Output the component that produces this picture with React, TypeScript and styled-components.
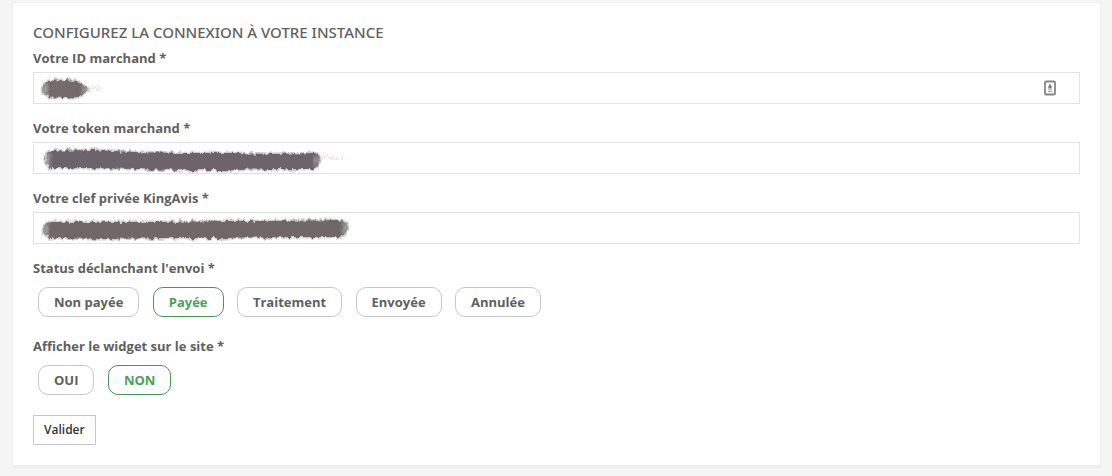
import React, { Fragment, useState } from "react";
import styled, { createGlobalStyle } from "styled-components";

const GlobalStyle = createGlobalStyle`
  *, *::before, *::after { box-sizing: border-box; }
  body {
    margin: 0;
    background: #f5f5f5;
    color: #606060;
    font-family: "Open Sans", "Noto Sans", sans-serif;
    font-size: 13px;
    line-height: 20px;
  }
`;

const Page = styled.main`
  padding: 2px 11px 8px 12px;
`;

const Card = styled.form`
  display: flex;
  flex-direction: column;
  align-items: stretch;
  padding: 18px 20px 20px;
  background: #fff;
  border: 1px solid #f0f0f0;
  border-bottom: 3px solid #ededed;
`;

const Title = styled.h1`
  margin: 0 0 5px;
  font-family: "Noto Sans", "Open Sans", sans-serif;
  font-size: 15px;
  font-weight: 500;
  line-height: 22px;
  text-transform: uppercase;
`;

const Field = styled.div`
  display: flex;
  flex-direction: column;
  gap: 4px;
  margin-bottom: 14px;
`;

const FieldLabel = styled.label`
  font-weight: 700;
`;

const InputWrap = styled.div`
  position: relative;
  display: flex;
`;

const TextInput = styled.input`
  flex: 1;
  min-width: 0;
  height: 32px;
  padding: 0 40px 0 12px;
  border: 1px solid #e2e2e2;
  background: #fff;
  color: #606060;
  font: inherit;
`;

const ScribbleLayer = styled.svg`
  position: absolute;
  left: 0;
  top: 0;
  width: 320px;
  height: 32px;
  pointer-events: none;
`;

const AutofillIcon = styled.svg`
  position: absolute;
  right: 24px;
  top: 8px;
  width: 12px;
  height: 16px;
`;

const ChoiceGroup = styled.fieldset`
  min-width: 0;
  margin: 0;
  padding: 0;
  border: 0;

  & + & {
    margin-top: 19px;
  }
`;

const Legend = styled.legend`
  margin-bottom: 9px;
  padding: 0;
  font-weight: 700;
`;

const Pills = styled.div`
  font-weight: 700;
`;

const Pill = styled.label<{ $on: boolean }>`
  position: relative;
  display: inline-block;
  height: 30px;
  margin: 0 5px;
  padding: 0 15px;
  border: 1px solid ${(p) => (p.$on ? "#4a9658" : "#c8c8c8")};
  border-radius: 10px;
  color: ${(p) => (p.$on ? "#4c9f5a" : "#606060")};
  line-height: 28px;
  vertical-align: top;
  cursor: pointer;
`;

const Radio = styled.input`
  position: absolute;
  inset: 0;
  width: 100%;
  height: 100%;
  margin: 0;
  opacity: 0;
  cursor: pointer;
`;

const Submit = styled.button`
  align-self: flex-start;
  height: 30px;
  margin-top: 20px;
  padding: 0 10px;
  border: 1px solid #c8c8c8;
  background: #fff;
  color: #333;
  font: inherit;
  font-size: 12px;
  font-weight: 600;
  cursor: pointer;
`;

type Mask = {
  from: number;
  to: number;
  outline: string;
  color: string;
  trail?: string;
};

/* Charcoal stroke that hides a private value: ragged edges, fading at both ends. */
function Scribble({ id, mask }: { id: string; mask: Mask }) {
  const { from, to, outline, color, trail } = mask;
  const fade = 9 / (to - from);
  return (
    <ScribbleLayer viewBox="0 0 320 32" aria-hidden="true">
      <defs>
        <filter id={`${id}-rough`} filterUnits="userSpaceOnUse" x="0" y="0" width="320" height="32">
          <feTurbulence type="fractalNoise" baseFrequency="0.24 0.12" numOctaves="3" seed="7" result="grain" />
          <feDisplacementMap
            in="SourceGraphic"
            in2="grain"
            scale="6"
            xChannelSelector="R"
            yChannelSelector="G"
          />
          <feGaussianBlur stdDeviation="0.7" />
        </filter>
        <linearGradient id={`${id}-ink`} gradientUnits="userSpaceOnUse" x1={from} x2={to} y1="0" y2="0">
          <stop offset="0" stopColor={color} stopOpacity="0.45" />
          <stop offset={fade} stopColor={color} stopOpacity="1" />
          <stop offset={1 - fade} stopColor={color} stopOpacity="1" />
          <stop offset="1" stopColor={color} stopOpacity="0.45" />
        </linearGradient>
      </defs>
      <g filter={`url(#${id}-rough)`}>
        <path
          d={outline}
          fill={`url(#${id}-ink)`}
          stroke={color}
          strokeOpacity="0.35"
          strokeWidth="3"
          strokeLinejoin="round"
        />
      </g>
      {trail && <path d={trail} fill="none" stroke="#d9bcc5" strokeOpacity="0.6" />}
    </ScribbleLayer>
  );
}

const fields: { id: string; label: string; mask: Mask; icon?: boolean }[] = [
  {
    id: "merchant-id",
    label: "Votre ID marchand *",
    icon: true,
    mask: {
      from: 8,
      to: 56,
      outline: "M9 17Q10 12 16 9L30 8L42 9Q50 12 55 17Q52 22 46 25L30 26L16 25Q10 22 9 17Z",
      color: "#736c6a",
      trail: "M55 15l3 2l2 -3M60 18q2 -6 4 -1M64 13q4 1 2 5h-3",
    },
  },
  {
    id: "merchant-token",
    label: "Votre token marchand *",
    mask: {
      from: 11,
      to: 289,
      outline:
        "M12 18Q13 11 18 9L60 8L100 10L150 11L200 11L240 12L280 11Q286 12 287 18Q285 25 280 27L240 27L200 28L150 28L100 27L60 26L18 26Q13 24 12 18Z",
      color: "#6d646a",
      trail: "M285 13q5 -1 4 5q-1 4 -4 2M291 16l3 -3l3 4l2 -2v3M301 18v-4M303 18q1 -5 3 0M308 15q3 0 1 3",
    },
  },
  {
    id: "private-key",
    label: "Votre clef privée KingAvis *",
    mask: {
      from: 9,
      to: 316,
      outline:
        "M10 18Q12 11 18 10L70 10L130 10L190 9L250 9L306 8Q314 10 315 16Q313 23 306 25L250 25L190 26L130 26L70 27L18 26Q11 24 10 18Z",
      color: "#706766",
    },
  },
];

function Choice(props: { name: string; legend: string; options: string[]; initial: string }) {
  const [value, setValue] = useState(props.initial);
  return (
    <ChoiceGroup>
      <Legend>{props.legend}</Legend>
      <Pills>
        {props.options.map((option) => (
          <Fragment key={option}>
            <Pill $on={option === value}>
              <Radio
                type="radio"
                name={props.name}
                value={option}
                checked={option === value}
                onChange={() => setValue(option)}
              />
              {option}
            </Pill>{" "}
          </Fragment>
        ))}
      </Pills>
    </ChoiceGroup>
  );
}

export default function App() {
  return (
    <>
      <GlobalStyle />
      <Page>
        <Card onSubmit={(e) => e.preventDefault()}>
          <Title>Configurez la connexion à votre instance</Title>
          {fields.map((field) => (
            <Field key={field.id}>
              <FieldLabel htmlFor={field.id}>{field.label}</FieldLabel>
              <InputWrap>
                <TextInput id={field.id} type="text" />
                <Scribble id={field.id} mask={field.mask} />
                {field.icon && (
                  <AutofillIcon viewBox="0 0 12 16" aria-hidden="true">
                    <rect x="1" y="1.5" width="10" height="13" rx="1" fill="#fff" stroke="#858585" strokeWidth="1.8" />
                    <path d="M6 3.5L7.6 6.5V8.5H4.4V6.5Z" fill="#777" />
                    <path d="M3.8 9.8H8.2M3.8 11.6H8.2" stroke="#a5a5a5" />
                  </AutofillIcon>
                )}
              </InputWrap>
            </Field>
          ))}
          <Choice
            name="status"
            legend="Status déclanchant l'envoi *"
            options={["Non payée", "Payée", "Traitement", "Envoyée", "Annulée"]}
            initial="Payée"
          />
          <Choice
            name="widget"
            legend="Afficher le widget sur le site *"
            options={["OUI", "NON"]}
            initial="NON"
          />
          <Submit type="submit">Valider</Submit>
        </Card>
      </Page>
    </>
  );
}
